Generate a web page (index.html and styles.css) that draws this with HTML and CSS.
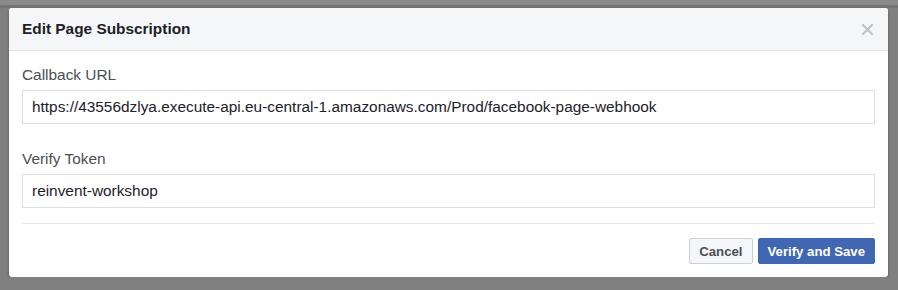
FILE: index.html
```html
<!DOCTYPE html>
<html lang="en">
<head>
  <meta charset="UTF-8">
  <title>Edit Page Subscription</title>
  <link rel="stylesheet" href="styles.css">
</head>
<body>
  <div class="backdrop-top"></div>
  <div class="dialog">
    <div class="dialog-header">
      <span class="dialog-title">Edit Page Subscription</span>
      <span class="close">
        <svg width="11" height="11" viewBox="0 0 11 11">
          <path d="M1 1 L10 10 M10 1 L1 10" stroke="#bec2c9" stroke-width="2.2" stroke-linecap="round"/>
        </svg>
      </span>
    </div>
    <div class="dialog-body">
      <label class="field-label">Callback URL</label>
      <input class="field-input" type="text" value="https://43556dzlya.execute-api.eu-central-1.amazonaws.com/Prod/facebook-page-webhook">
      <label class="field-label second">Verify Token</label>
      <input class="field-input" type="text" value="reinvent-workshop">
      <div class="footer">
        <button class="btn cancel">Cancel</button>
        <button class="btn primary">Verify and Save</button>
      </div>
    </div>
  </div>
</body>
</html>
```

FILE: styles.css
```css
body {
  margin: 0;
  padding: 0;
  background-color: #808080;
  font-family: Helvetica, "Liberation Sans", Arial, sans-serif;
  font-size: 15.4px;
  color: #1d2129;
  overflow: hidden;
}

.backdrop-top {
  height: 5px;
  background-color: #8a8a8a;
  border-bottom: 3px solid #747474;
}

.dialog {
  margin-left: 9px;
  width: 879px;
  background: white;
  border-radius: 3px;
  box-shadow: 0 2px 3px rgba(0, 0, 0, 0.35);
  overflow: hidden;
}

.dialog-header {
  display: flex;
  align-items: center;
  justify-content: space-between;
  height: 42px;
  padding: 0 15px 0 13px;
  background-color: #f5f6f7;
  border-bottom: 1px solid #e5e5e5;
}

.dialog-title {
  font-weight: bold;
  font-size: 15.4px;
  color: #1d2129;
}

.close {
  display: flex;
}

.dialog-body {
  display: flex;
  flex-direction: column;
  padding: 15px 13px 13px 13px;
}

.field-label {
  font-size: 15.4px;
  line-height: 18px;
  color: #4b4f56;
  margin-bottom: 6px;
}

.field-label.second {
  margin-top: 26px;
}

.field-input {
  height: 34px;
  box-sizing: border-box;
  border: 1px solid #dddfe2;
  border-radius: 0;
  padding: 0 9px;
  font-family: Helvetica, "Liberation Sans", Arial, sans-serif;
  font-size: 15.4px;
  color: #1d2129;
  outline: none;
}

.footer {
  display: flex;
  justify-content: flex-end;
  gap: 5px;
  margin-top: 15px;
  padding-top: 14px;
  border-top: 1px solid #e5e5e5;
}

.btn {
  height: 26px;
  box-sizing: border-box;
  padding: 0 9px;
  border-radius: 2px;
  font-family: Helvetica, "Liberation Sans", Arial, sans-serif;
  font-size: 13.2px;
  font-weight: bold;
  cursor: pointer;
}

.cancel {
  background-color: #f5f6f7;
  border: 1px solid #ccd0d5;
  color: #4b4f56;
}

.primary {
  background-color: #4267b2;
  border: 1px solid #4267b2;
  color: white;
}
```
